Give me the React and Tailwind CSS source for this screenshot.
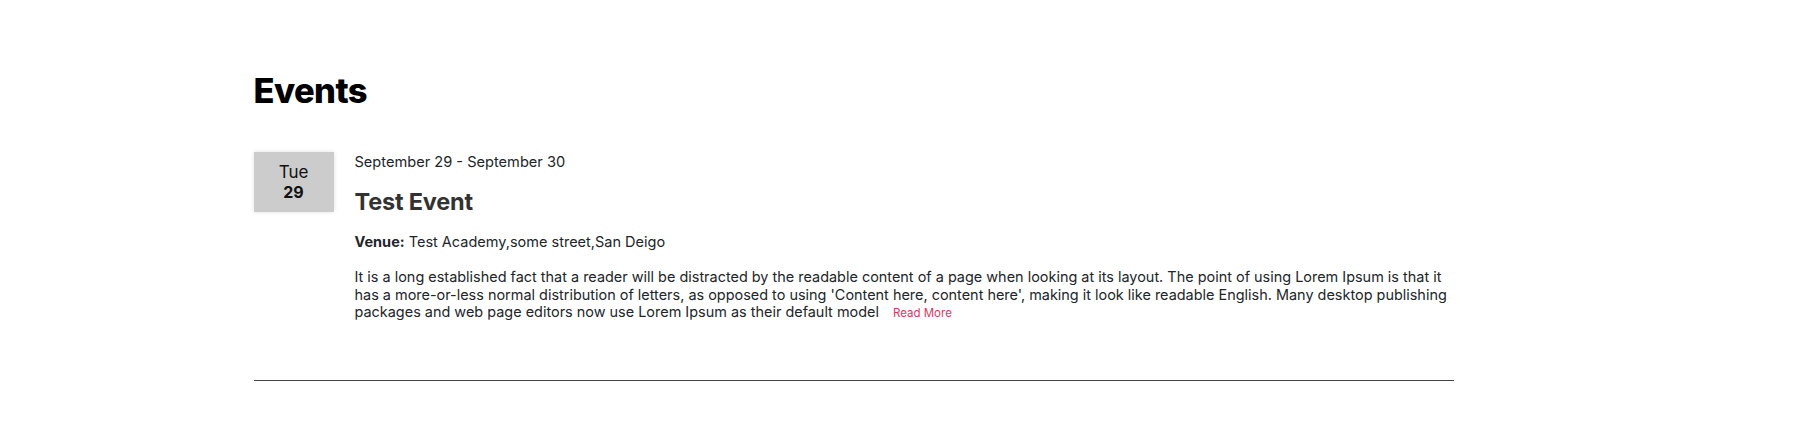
const event = {
  day: 'Tue',
  date: '29',
  range: 'September 29 - September 30',
  title: 'Test Event',
  venue: 'Test Academy,some street,San Deigo',
  body:
    "It is a long established fact that a reader will be distracted by the readable content of a page when looking at its layout. The point of using Lorem Ipsum is that it has a more-or-less normal distribution of letters, as opposed to using 'Content here, content here', making it look like readable English. Many desktop publishing packages and web page editors now use Lorem Ipsum as their default model",
}

export default function App() {
  return (
    <div className="min-h-screen bg-white font-['Inter',sans-serif] text-[#212529]">
      <main className="max-w-[1300px] mx-auto pt-[70px]">
        <h1 className="text-[34.5px] leading-[42px] font-extrabold tracking-[-0.6px] text-black">Events</h1>

        <div className="w-[1200px] mt-[40px] pb-[57px] border-b border-[#444] flex items-start gap-[21px]">
          <div className="w-[80px] h-[60px] shrink-0 bg-[#cccccc] shadow-[0_0_4px_rgba(0,0,0,0.12)] flex flex-col items-center justify-center text-[#111]">
            <span className="text-[17px] leading-[20px]">{event.day}</span>
            <span className="text-[16px] leading-[20px] font-bold">{event.date}</span>
          </div>

          <div className="flex-1 min-w-0">
            <p className="mt-[1px] text-[14.6px] leading-[18px]">{event.range}</p>
            <h2 className="mt-[16px] text-[23.5px] leading-[30px] font-bold tracking-[-0.2px] text-[#333]">{event.title}</h2>
            <p className="mt-[15px] text-[14.5px] leading-[20px]">
              <span className="font-bold">Venue:</span> {event.venue}
            </p>
            <p className="mt-[16px] text-[14.45px] leading-[17.5px]">
              {event.body}
              <a href="#" className="ml-[14px] text-[11.5px] text-[#dc3563] no-underline">
                Read More
              </a>
            </p>
          </div>
        </div>
      </main>
    </div>
  )
}
